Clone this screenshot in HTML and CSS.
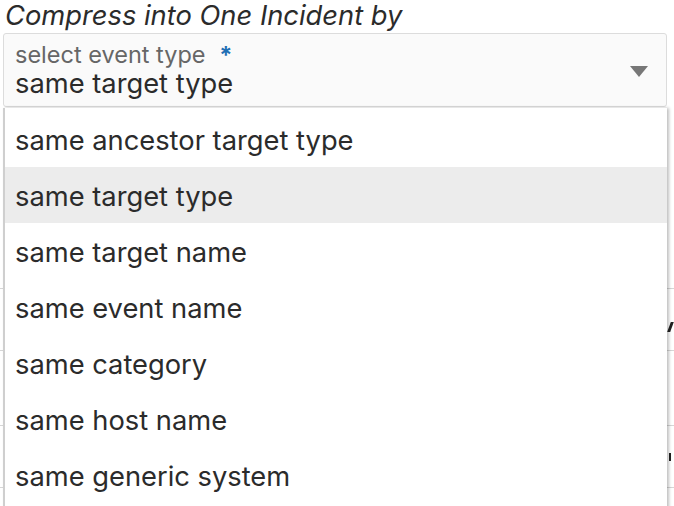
FILE: index.html
```html
<!DOCTYPE html>
<html>
<head>
<meta charset="utf-8">
<link rel="stylesheet" href="styles.css">
</head>
<body>
<div class="page">
  <div class="label">Compress into One Incident by</div>
  <div class="field">
    <div class="field-text">
      <div class="placeholder">select event type <span class="req">*</span></div>
      <div class="value">same target type</div>
    </div>
    <span class="arrow"></span>
  </div>
  <div class="behind">
    <div class="brow r1"></div>
    <div class="brow r2"><span class="bmark m1"></span></div>
    <div class="brow r3"></div>
    <div class="brow r4"><span class="bmark m2"></span></div>
  </div>
  <ul class="menu">
    <li class="item">same ancestor target type</li>
    <li class="item active">same target type</li>
    <li class="item">same target name</li>
    <li class="item">same event name</li>
    <li class="item">same category</li>
    <li class="item">same host name</li>
    <li class="item">same generic system</li>
  </ul>
</div>
</body>
</html>
```
FILE: styles.css
```css
html, body {
  margin: 0;
  padding: 0;
  background: #ffffff;
  overflow: hidden;
}
body {
  font-family: Inter, "Liberation Sans", Arial, sans-serif;
  color: #333333;
}
.page {
  position: relative;
  width: 674px;
  height: 506px;
  overflow: hidden;
}
.label {
  font-style: italic;
  font-size: 27.3px;
  line-height: 32px;
  height: 33px;
  padding-left: 5px;
  color: #2b2b2b;
}
.field {
  box-sizing: border-box;
  margin-left: 3px;
  width: 664px;
  height: 74px;
  border: 1px solid #dcdcdc;
  border-radius: 3px;
  background: #fafafa;
  display: flex;
  align-items: center;
  justify-content: space-between;
  padding: 0 16px 0 11px;
}
.field-text {
  display: flex;
  flex-direction: column;
  margin-top: 2px;
}
.placeholder {
  font-size: 23.5px;
  line-height: 26px;
  color: #666666;
}
.req {
  color: #1f6fb4;
  font-weight: bold;
  margin-left: 7px;
}
.value {
  font-size: 27.3px;
  line-height: 32px;
  color: #2b2b2b;
}
.arrow {
  width: 0;
  height: 0;
  border-left: 9px solid transparent;
  border-right: 9px solid transparent;
  border-top: 11px solid #777777;
  margin-top: 2px;
  margin-right: 2px;
}
.behind {
  position: absolute;
  left: 0;
  top: 0;
  width: 674px;
  height: 506px;
}
.brow {
  position: absolute;
  left: 0;
  right: 0;
  height: 1px;
  background: #d6d6d6;
}
.r1 { top: 288px; }
.r2 { top: 350px; }
.r3 { top: 425px; }
.r4 { top: 487px; }
.bmark {
  position: absolute;
  left: 669px;
  width: 3px;
  background: #222;
}
.m1 { top: -28px; height: 10px; transform: skewX(-20deg); }
.m2 { top: -34px; height: 8px; width: 2px; }
.menu {
  position: absolute;
  left: 3px;
  top: 108px;
  width: 664px;
  box-sizing: border-box;
  margin: 0;
  padding: 3px 0 0 0;
  list-style: none;
  background: #ffffff;
  border-left: 2px solid #cfcfcf;
  box-shadow: 2px 0 3px rgba(0, 0, 0, 0.25);
  height: 420px;
}
.item {
  box-sizing: border-box;
  height: 56px;
  padding-top: 4px;
  line-height: 52px;
  font-size: 27.3px;
  padding-left: 10px;
  color: #2b2b2b;
  white-space: nowrap;
}
.item.active {
  background: #ececec;
}
```
